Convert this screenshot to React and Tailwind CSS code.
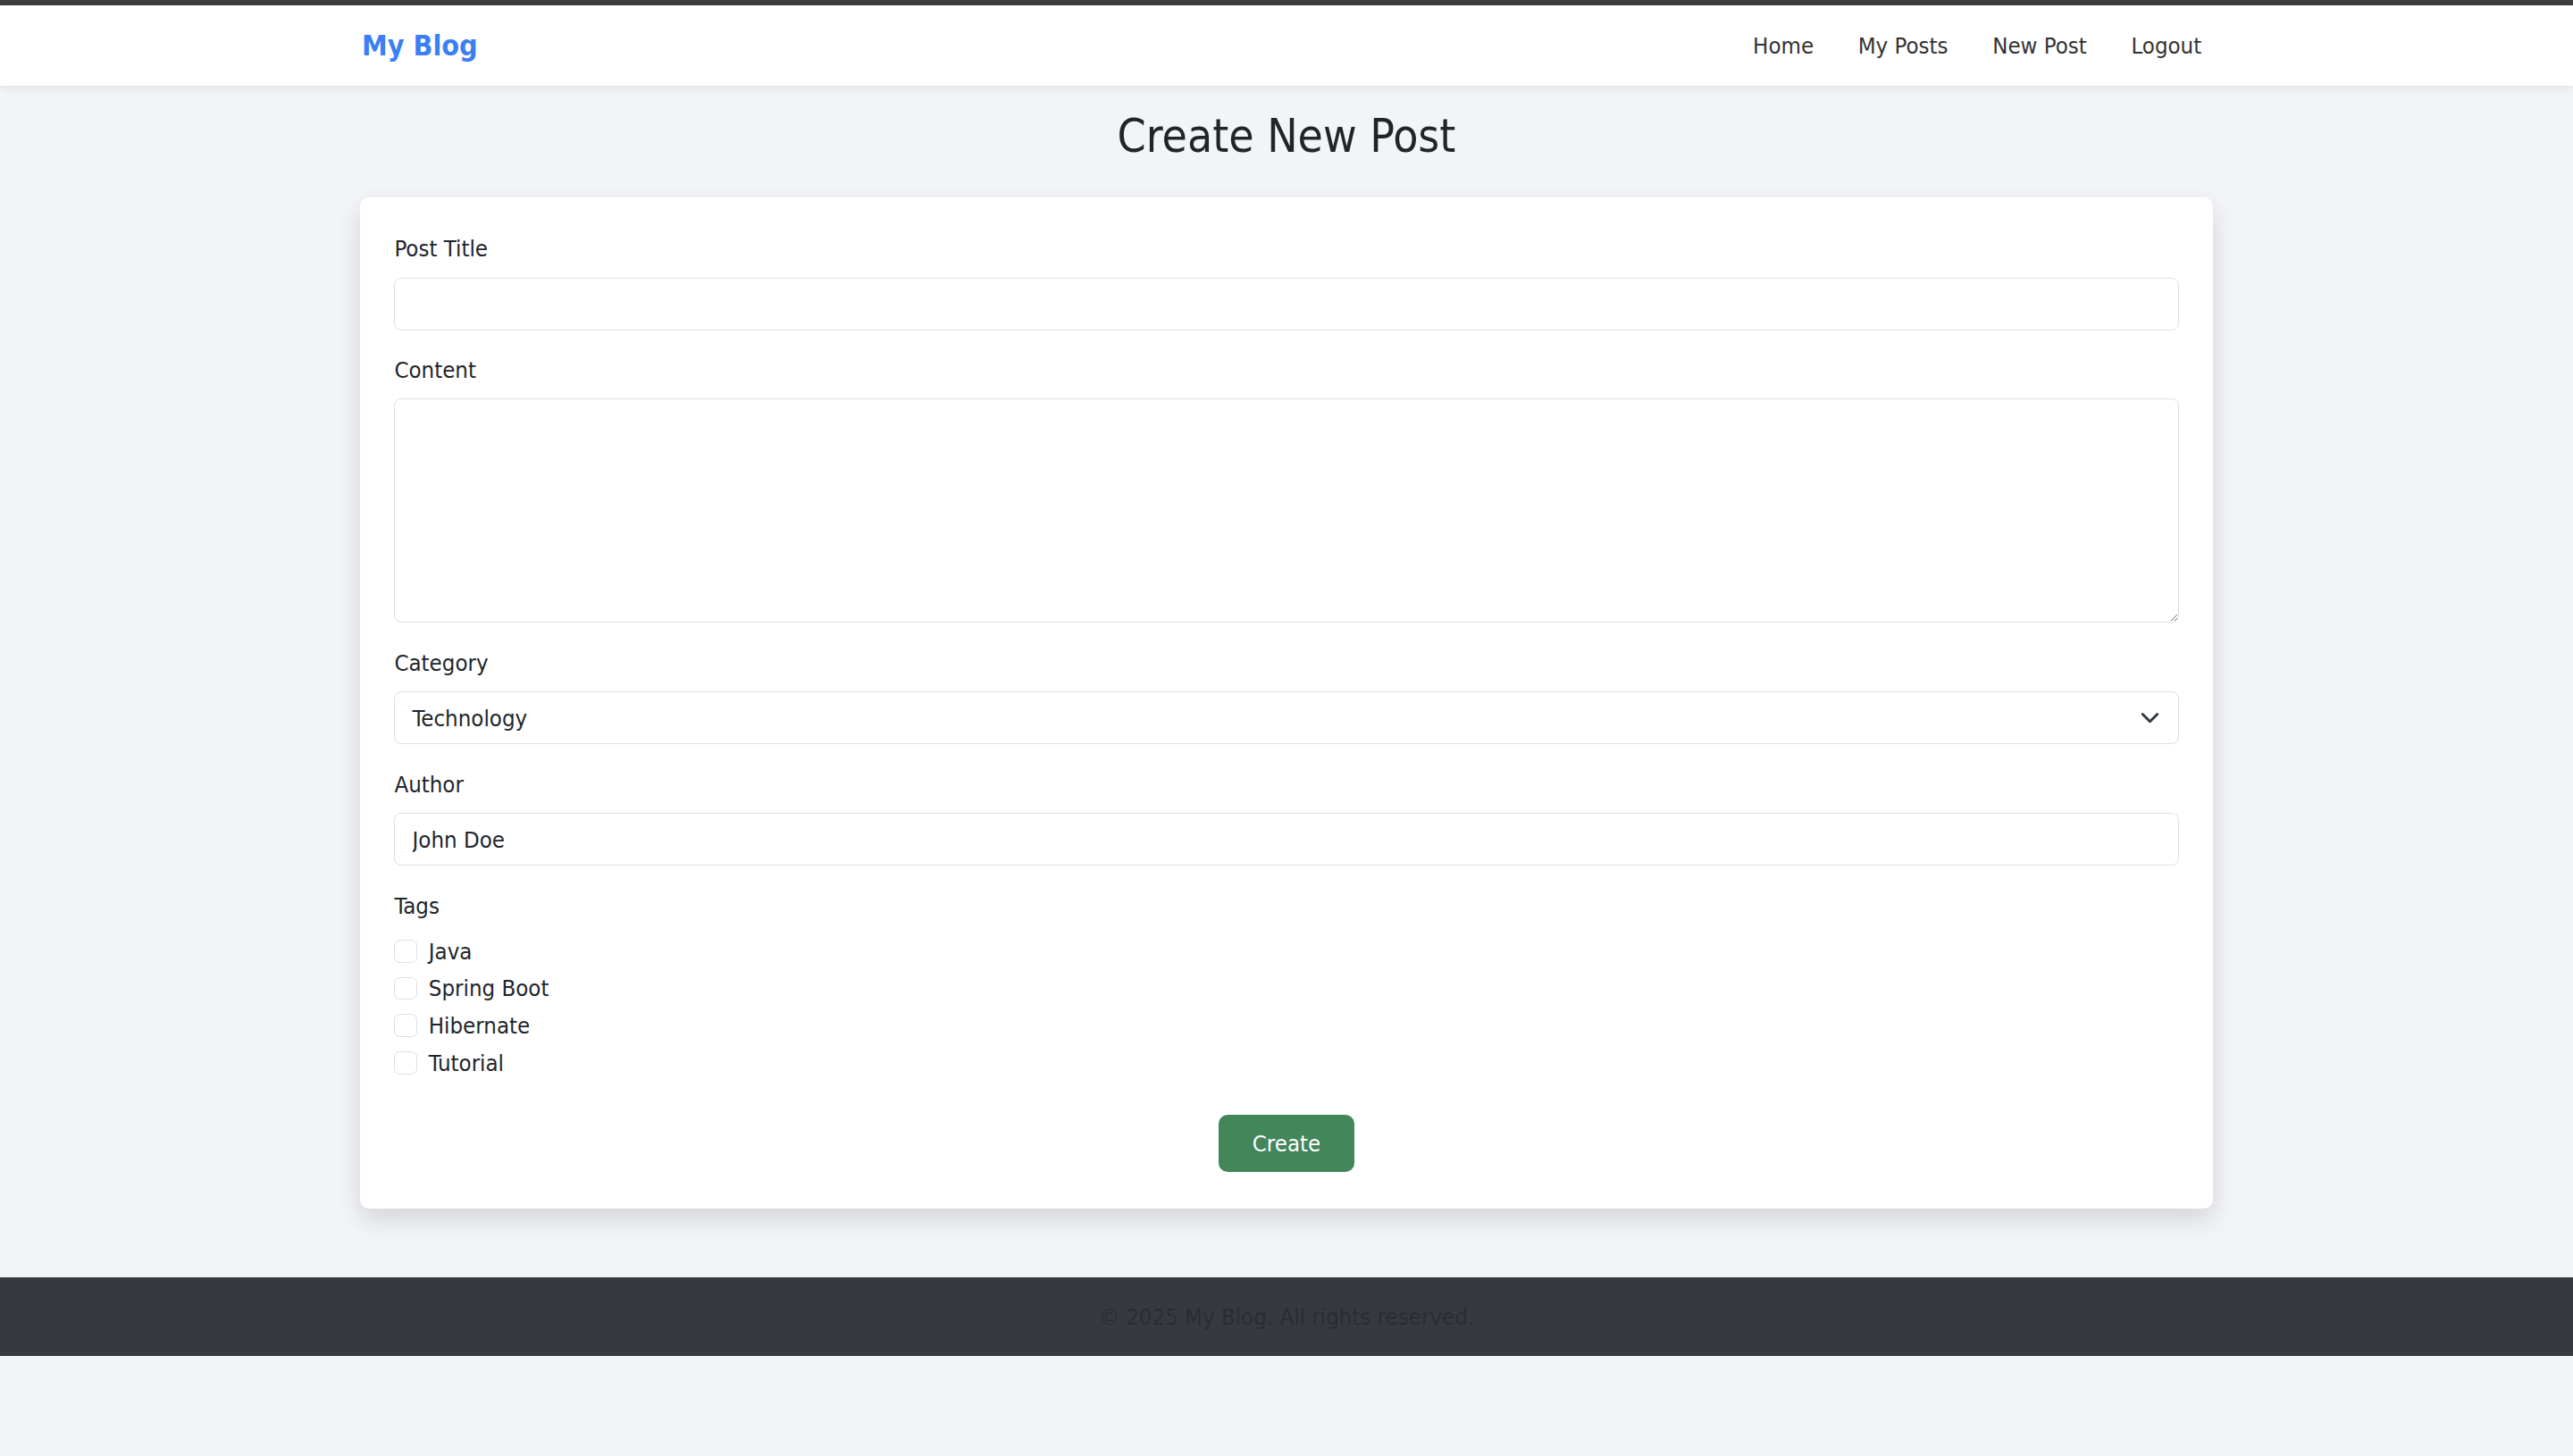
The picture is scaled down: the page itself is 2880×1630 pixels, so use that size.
import React from 'react';

// Create-post form page. Everything is sized at 1.6x of a plain Bootstrap
// layout (16px body -> 25.6px) to match the reference capture.

const TAGS = ['Java', 'Spring Boot', 'Hibernate', 'Tutorial'];
const NAV = ['Home', 'My Posts', 'New Post', 'Logout'];

function Label({ children }) {
  return <label className="block text-[25.6px] leading-[38.4px] mb-[12.8px] text-[#212529]">{children}</label>;
}

function TextInput({ value }) {
  return (
    <input
      type="text"
      defaultValue={value}
      className="block w-full h-[59px] px-[19.2px] bg-white border border-[#dcdfe3] rounded-[8px] text-[25.6px] text-[#212529] outline-none"
    />
  );
}

function Chevron() {
  return (
    <svg width="25" height="18" viewBox="0 0 16 12" className="absolute right-[20px] top-1/2 -translate-y-1/2 pointer-events-none">
      <path d="m2.5 3 5.5 5.5 5.5-5.5" fill="none" stroke="#343a40" strokeWidth="2" strokeLinecap="round" strokeLinejoin="round" />
    </svg>
  );
}

export default function App() {
  return (
    <div className="min-h-[1630px] bg-[#f3f4f8] font-['DejaVu_Sans_Condensed','DejaVu_Sans',sans-serif] font-stretch-condensed text-[#212529]">
      <div className="h-[6px] bg-[#3d3d3d]" />
      <nav className="h-[90px] bg-white shadow-[0_3px_8px_rgba(0,0,0,0.07)] relative">
        <div className="w-[2074px] mx-auto h-full flex items-center justify-between">
          <a className="text-[32px] font-bold text-[#3b7ff5] pl-[2px]">My Blog</a>
          <ul className="flex items-center gap-[24px]">
            {NAV.map((n) => (
              <li key={n}>
                <a className="block px-[12.8px] text-[25.6px] leading-[38.4px] text-[#333]">{n}</a>
              </li>
            ))}
          </ul>
        </div>
      </nav>

      <main className="w-[2074px] mx-auto">
        <h2 className="mt-[26px] mb-[37.6px] text-center text-[51.2px] leading-[1.2] text-[#212529]">Create New Post</h2>

        <div className="bg-white rounded-[10px] shadow-[0_12px_28px_rgba(0,0,0,0.13)] px-[38.4px] pt-[38.4px] pb-[41px]">
          <div className="mb-[25.6px]">
            <Label>Post Title</Label>
            <TextInput value="" />
          </div>

          <div className="mb-[25.6px]">
            <Label>Content</Label>
            <textarea className="block w-full h-[251px] px-[19.2px] py-[9.6px] bg-white border border-[#dcdfe3] rounded-[8px] text-[25.6px] outline-none" />
          </div>

          <div className="mb-[25.6px]">
            <Label>Category</Label>
            <div className="relative">
              <div className="h-[59px] flex items-center px-[19.2px] bg-white border border-[#dcdfe3] rounded-[8px] text-[25.6px] text-[#212529]">
                Technology
              </div>
              <Chevron />
            </div>
          </div>

          <div className="mb-[25.6px]">
            <Label>Author</Label>
            <TextInput value="John Doe" />
          </div>

          <div>
            <Label>Tags</Label>
            {TAGS.map((t) => (
              <div key={t} className="flex items-start mb-[3.2px] h-[38.4px]">
                <input
                  type="checkbox"
                  className="appearance-none w-[25.6px] h-[25.6px] mt-[6.4px] border border-[#dcdfe3] rounded-[6.4px] bg-white shrink-0"
                />
                <span className="ml-[12.8px] text-[25.6px] leading-[38.4px]">{t}</span>
              </div>
            ))}
          </div>

          <div className="mt-[39px] flex justify-center">
            <button className="w-[152px] h-[64px] rounded-[10px] bg-[#42865a] text-white text-[25.6px]">Create</button>
          </div>
        </div>
      </main>

      <footer className="mt-[77px] h-[88px] bg-[#363a3f] flex items-center justify-center">
        <p className="text-[25.6px] text-[#292d32]">© 2025 My Blog. All rights reserved.</p>
      </footer>
    </div>
  );
}
